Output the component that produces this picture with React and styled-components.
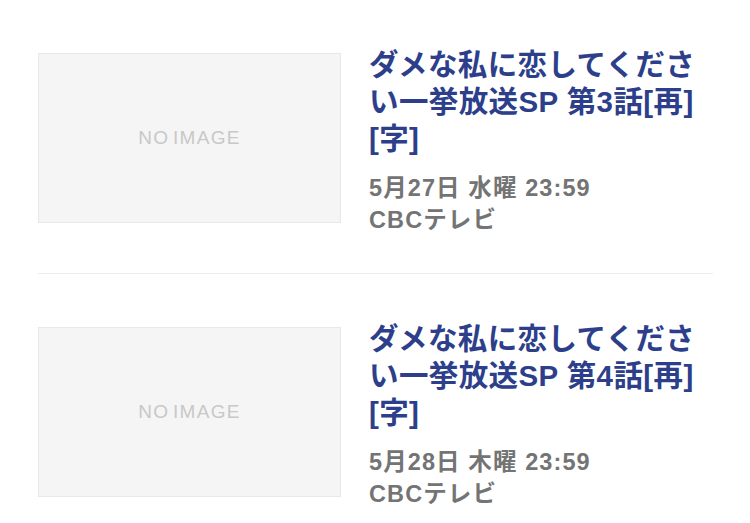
import React from "react";
import styled, { createGlobalStyle } from "styled-components";

const GlobalStyle = createGlobalStyle`
   html, body {
      margin: 0;
      padding: 0;
      background: #fff;
   }
   body {
      font-family: "Liberation Sans", "Noto Sans CJK JP", sans-serif;
      -webkit-font-smoothing: antialiased;
   }
`;

const List = styled.ul`
   list-style: none;
   margin: 0;
   padding: 0 37px 0 38px;
`;

const Item = styled.li`
   display: flex;
   align-items: flex-start;
   column-gap: 28px;
   padding: 46px 0 37px;
   border-bottom: 1px solid ${(p) => (p.last ? "transparent" : "#ececec")};
`;

const Thumb = styled.div`
   flex: 0 0 auto;
   display: flex;
   align-items: center;
   justify-content: center;
   width: 301px;
   height: 168px;
   margin-top: 7px;
   background-color: #f5f5f5;
   border: 1px solid #e8e8e8;
   color: #c8c8c8;
   font-size: 19px;
   letter-spacing: 1.3px;
   word-spacing: -3px;
`;

const Body = styled.div`
   flex: 1;
   min-width: 0;
`;

const Title = styled.h2`
   margin: 0;
   font-size: 29.5px;
   line-height: 37px;
   font-weight: 700;
   letter-spacing: 0.4px;
   color: #2d3f8b;
`;

const Meta = styled.div`
   margin-top: 15px;
   font-size: 23.5px;
   line-height: 32px;
   font-weight: 700;
   color: #747474;
   letter-spacing: 1.1px;
`;

const programs = [
   {
      title: "ダメな私に恋してくださ\u200bい一挙放送SP 第3話[再]\u200b[字]",
      date: "5月27日 水曜 23:59",
      station: "CBCテレビ",
   },
   {
      title: "ダメな私に恋してくださ\u200bい一挙放送SP 第4話[再]\u200b[字]",
      date: "5月28日 木曜 23:59",
      station: "CBCテレビ",
   },
];

const App = () => {
   return (
      <>
         <GlobalStyle />
         <List>
            {programs.map((item, index) => (
               <Item key={index} last={index === programs.length - 1}>
                  <Thumb>NO IMAGE</Thumb>
                  <Body>
                     <Title>{item.title}</Title>
                     <Meta>
                        {item.date}
                        <br />
                        {item.station}
                     </Meta>
                  </Body>
               </Item>
            ))}
         </List>
      </>
   );
};

export default App;
